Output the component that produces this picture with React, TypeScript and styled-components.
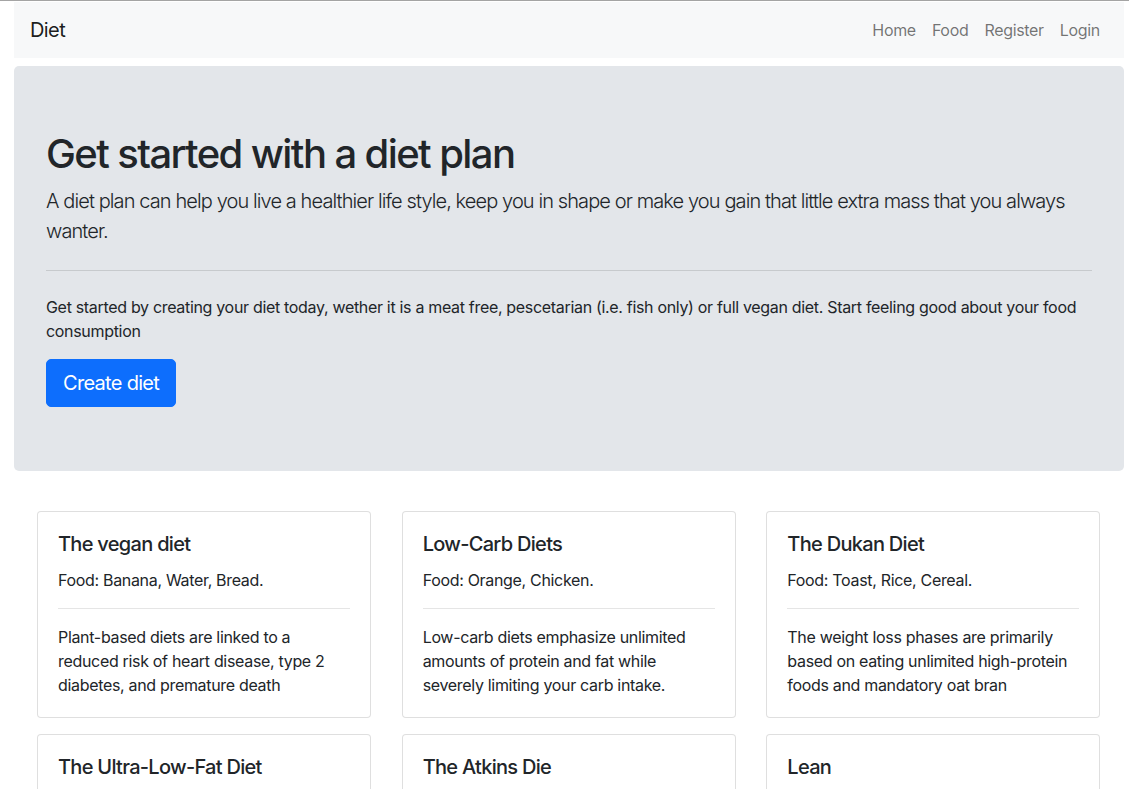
import styled, { createGlobalStyle } from "styled-components";

const GlobalStyle = createGlobalStyle`
  * { box-sizing: border-box; }
  body {
    margin: 0;
    border-top: 1px solid #a4a4a4;
    padding-top: 1px;
    font-family: Inter, "Liberation Sans", Arial, sans-serif;
    font-size: 16px;
    line-height: 1.5;
    letter-spacing: -0.02em;
    color: #212529;
    background: #fff;
  }
`;

interface DietType {
  title: string;
  food: string;
  text: string;
}

const diets: DietType[] = [
  {
    title: "The vegan diet",
    food: "Banana, Water, Bread.",
    text: "Plant-based diets are linked to a reduced risk of heart disease, type 2 diabetes, and premature death",
  },
  {
    title: "Low-Carb Diets",
    food: "Orange, Chicken.",
    text: "Low-carb diets emphasize unlimited amounts of protein and fat while severely limiting your carb intake.",
  },
  {
    title: "The Dukan Diet",
    food: "Toast, Rice, Cereal.",
    text: "The weight loss phases are primarily based on eating unlimited high-protein foods and mandatory oat bran",
  },
  {
    title: "The Ultra-Low-Fat Diet",
    food: "Rice, Beans, Apple.",
    text: "An ultra-low-fat diet restricts your consumption of fat to under 10% of daily calories.",
  },
  {
    title: "The Atkins Die",
    food: "Eggs, Cheese, Fish.",
    text: "The Atkins Diet is the best-known low-carb weight loss diet.",
  },
  {
    title: "Lean",
    food: "Chicken, Broccoli, Rice.",
    text: "A lean diet keeps your portions light while keeping you full through the day.",
  },
];

const navLinks = ["Home", "Food", "Register", "Login"];

export default function App() {
  return (
    <>
      <GlobalStyle />
      <Page>
        <NavBar>
          <Brand href="#">Diet</Brand>
          <NavList>
            {navLinks.map((l) => (
              <NavLink key={l} href="#">
                {l}
              </NavLink>
            ))}
          </NavList>
        </NavBar>

        <Jumbotron>
          <Heading>Get started with a diet plan</Heading>
          <Lead>
            A diet plan can help you live a healthier life style, keep you in shape or make you gain
            that little extra mass that you always wanter.
          </Lead>
          <Divider />
          <Text>
            Get started by creating your diet today, wether it is a meat free, pescetarian (i.e. fish
            only) or full vegan diet. Start feeling good about your food consumption
          </Text>
          <PrimaryButton type="button">Create diet</PrimaryButton>
        </Jumbotron>

        <CardGrid>
          {diets.map((d) => (
            <Card key={d.title}>
              <CardTitle>{d.title}</CardTitle>
              <CardText>Food: {d.food}</CardText>
              <CardDivider />
              <CardText $last>{d.text}</CardText>
            </Card>
          ))}
        </CardGrid>
      </Page>
    </>
  );
}

const Page = styled.div`
  width: 1110px;
  margin-left: 14px;
`;

const NavBar = styled.nav`
  display: flex;
  align-items: center;
  justify-content: space-between;
  height: 56px;
  padding: 8px 16px;
  background: #f7f8f9;
`;

const Brand = styled.a`
  font-size: 20px;
  line-height: 30px;
  letter-spacing: -0.03em;
  color: rgba(0, 0, 0, 0.9);
  text-decoration: none;
`;

const NavList = styled.div`
  display: flex;
`;

const NavLink = styled.a`
  padding: 8px;
  font-size: 16px;
  line-height: 24px;
  color: rgba(0, 0, 0, 0.55);
  text-decoration: none;
`;

const Jumbotron = styled.section`
  margin-top: 8px;
  padding: 64px 32px;
  background: #e3e6ea;
  border-radius: 5px;
`;

const Heading = styled.h1`
  margin: 0 0 8px;
  font-size: 40px;
  line-height: 48px;
  font-weight: 500;
  letter-spacing: -0.04em;
`;

const Lead = styled.p`
  margin: 0;
  font-size: 20px;
  line-height: 30px;
  font-weight: 300;
  letter-spacing: -0.045em;
`;

const Divider = styled.hr`
  margin: 24px 0;
  border: 0;
  border-top: 1px solid rgba(0, 0, 0, 0.12);
`;

const Text = styled.p`
  margin: 0 0 16px;
`;

const PrimaryButton = styled.button`
  display: inline-block;
  height: 48px;
  padding: 8px 16px;
  font-family: inherit;
  font-size: 20px;
  line-height: 30px;
  letter-spacing: -0.035em;
  white-space: nowrap;
  color: #fff;
  background: #0d6efd;
  border: 1px solid #0d6efd;
  border-radius: 5px;
  cursor: pointer;
`;

const CardGrid = styled.div`
  display: grid;
  grid-template-columns: repeat(3, 1fr);
  column-gap: 30.5px;
  row-gap: 16px;
  width: 1063.5px;
  margin: 40px 0 0 23px;
`;

const Card = styled.div`
  padding: 20px;
  border: 1px solid rgba(0, 0, 0, 0.125);
  border-radius: 4px;
  background: #fff;
`;

const CardTitle = styled.h5`
  margin: 0 0 12px;
  font-size: 20px;
  line-height: 24px;
  font-weight: 500;
  letter-spacing: -0.035em;
`;

const CardText = styled.p<{ $last?: boolean }>`
  margin: 0 0 ${({ $last }) => ($last ? 0 : 16)}px;
`;

const CardDivider = styled.hr`
  margin: 0 0 16px;
  border: 0;
  border-top: 1px solid rgba(0, 0, 0, 0.1);
`;
